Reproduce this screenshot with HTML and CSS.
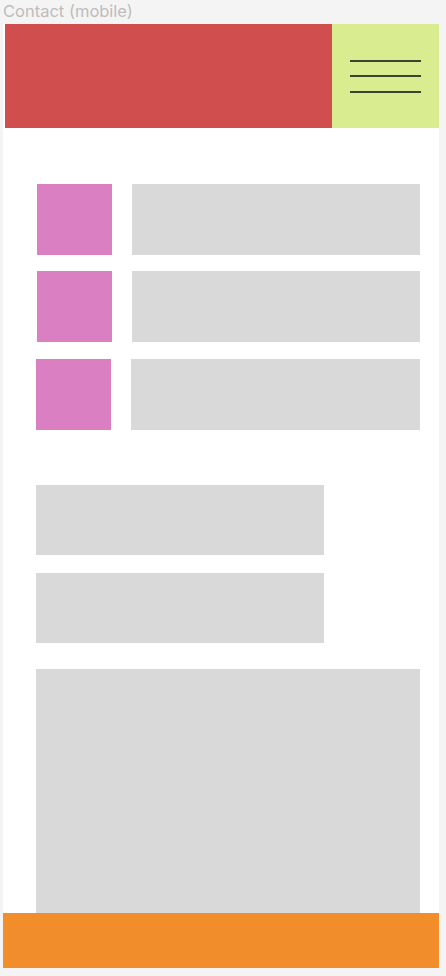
FILE: index.html
```html
<!DOCTYPE html>
<html lang="en">
<head>
  <meta charset="UTF-8">
  <meta name="viewport" content="width=device-width, initial-scale=1.0">
  <title>Contact (mobile)</title>
  <link rel="stylesheet" href="styles.css">
</head>
<body>
  <div class="frame-label">Contact (mobile)</div>

  <div class="frame">
    <!-- Header with logo block and menu -->
    <header class="header">
      <div class="logo"></div>
      <div class="menu">
        <span class="menu-line"></span>
        <span class="menu-line"></span>
        <span class="menu-line"></span>
      </div>
    </header>

    <!-- Contact details -->
    <div class="contact-list">
      <div class="contact-row">
        <div class="contact-icon"></div>
        <div class="contact-text"></div>
      </div>
      <div class="contact-row">
        <div class="contact-icon"></div>
        <div class="contact-text"></div>
      </div>
      <div class="contact-row shifted">
        <div class="contact-icon"></div>
        <div class="contact-text"></div>
      </div>
    </div>

    <!-- Contact form -->
    <div class="contact-form">
      <div class="field"></div>
      <div class="field"></div>
      <div class="message"></div>
    </div>

    <footer class="footer"></footer>
  </div>
</body>
</html>
```

FILE: styles.css
```css
body {
  margin: 0;
  padding: 0;
  background-color: #f4f4f4;
  font-family: Inter, "Liberation Sans", Arial, sans-serif;
}

.frame-label {
  height: 24px;
  padding-left: 3px;
  font-size: 16.5px;
  line-height: 22px;
  color: #bdbdbd;
}

.frame {
  margin-left: 3px;
  width: 436px;
  background: #fff;
  display: flex;
  flex-direction: column;
}

.header {
  display: flex;
  height: 104px;
  margin-left: 2px;
}

.logo {
  flex: 1;
  background: #d14e4e;
}

.menu {
  width: 107px;
  background: #d9ec8f;
  display: flex;
  flex-direction: column;
  align-items: center;
  justify-content: center;
  gap: 13.5px;
}

.menu-line {
  display: block;
  width: 71px;
  height: 2px;
  background: #3a4530;
}

.contact-list {
  display: flex;
  flex-direction: column;
  gap: 16.5px;
  padding: 55.5px 19px 0 34px;
}

.contact-row {
  display: flex;
  gap: 20px;
  height: 71px;
}

.contact-row.shifted {
  margin-left: -1px;
}

.contact-icon {
  width: 75px;
  background: #d97fc2;
}

.contact-text {
  flex: 1;
  background: #d9d9d9;
}

.contact-form {
  display: flex;
  flex-direction: column;
  padding: 55px 19px 0 33px;
}

.field {
  width: 288px;
  height: 70px;
  margin-bottom: 18px;
  background: #d9d9d9;
}

.message {
  height: 244px;
  margin-top: 8px;
  background: #d9d9d9;
}

.footer {
  height: 55px;
  background: #f28d2c;
}
```
